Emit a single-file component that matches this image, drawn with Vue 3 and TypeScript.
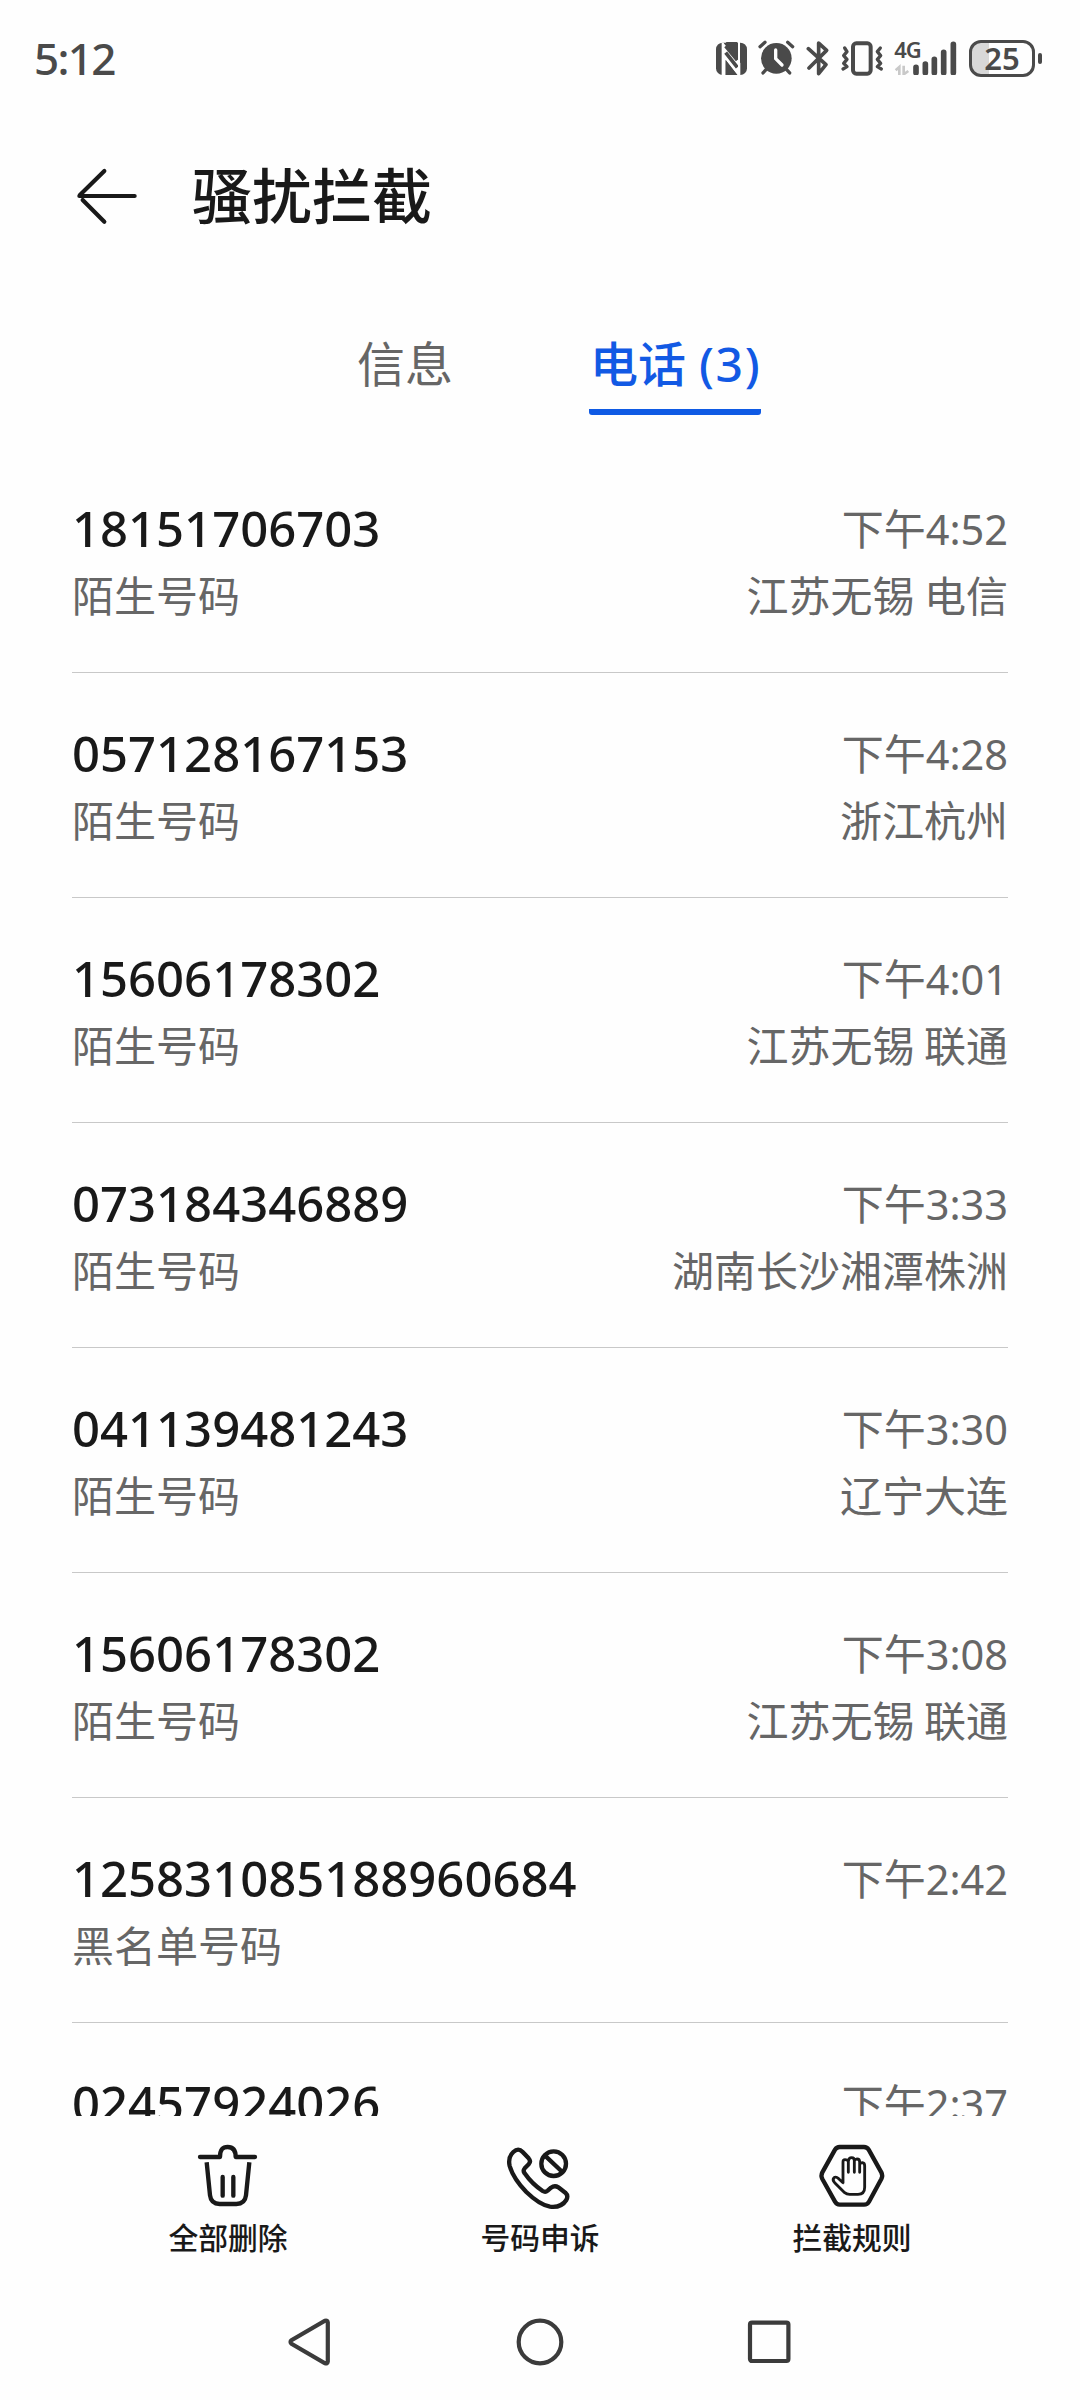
<script setup lang="ts">
interface CallRecord {
  number: string
  label: string
  time: string
  place: string
}

const calls: CallRecord[] = [
  { number: '18151706703', label: '陌生号码', time: '4:52', place: '江苏无锡 电信' },
  { number: '057128167153', label: '陌生号码', time: '4:28', place: '浙江杭州' },
  { number: '15606178302', label: '陌生号码', time: '4:01', place: '江苏无锡 联通' },
  { number: '073184346889', label: '陌生号码', time: '3:33', place: '湖南长沙湘潭株洲' },
  { number: '041139481243', label: '陌生号码', time: '3:30', place: '辽宁大连' },
  { number: '15606178302', label: '陌生号码', time: '3:08', place: '江苏无锡 联通' },
  { number: '125831085188960684', label: '黑名单号码', time: '2:42', place: '' },
  { number: '02457924026', label: '', time: '2:37', place: '' },
]
</script>

<template>
  <div class="screen">
    <header class="status">
      <span class="clock">5:12</span>
      <div class="status-icons">
        <svg class="nfc" viewBox="48 64 93 99">
          <rect x="48" y="66" width="93" height="97" rx="20" fill="#4a4a4a" />
          <path d="M68 64 L121 127 V163 L112 163 L77 118 V163 H68 Z" fill="#fff" />
          <path d="M77 76 L112 118 M77 96 L112 140" stroke="#4a4a4a" stroke-width="11" fill="none" />
          <path d="M77 64 L112 106 V64 Z" fill="#4a4a4a" />
          <path d="M77 118 L112 163 H77 Z" fill="#4a4a4a" />
          <path d="M68 66 V163 M117 64 V163" stroke="#fff" stroke-width="6" fill="none" />
        </svg>
        <svg class="alarm" viewBox="176 62 110 106">
          <circle cx="231" cy="117" r="46" fill="#4a4a4a" />
          <path d="M182 82 L197 69 M280 82 L265 69 M202 149 L191 161 M260 149 L271 161" stroke="#4a4a4a" stroke-width="10" stroke-linecap="round" />
          <path d="M229 92 V118 L248 137" stroke="#fff" stroke-width="10" stroke-linecap="round" stroke-linejoin="round" fill="none" />
        </svg>
        <svg class="bluetooth" viewBox="318 60 70 110">
          <path d="M325 86 L378 134 L356 161 V69 L380 91 L327 144" stroke="#4a4a4a" stroke-width="11" stroke-linecap="round" stroke-linejoin="round" fill="none" />
        </svg>
        <svg class="vibrate" viewBox="420 60 132 110">
          <rect x="459" y="70" width="53" height="91" rx="10" stroke="#4a4a4a" stroke-width="12" fill="none" />
          <path d="M434 84 L441 95 L431 107 L441 118 L431 130 L441 140 L429 147 M541 84 L532 95 L542 107 L532 118 L542 130 L532 140 L544 147" stroke="#4a4a4a" stroke-width="10" stroke-linecap="round" stroke-linejoin="round" fill="none" />
        </svg>
        <div class="signal">
          <span class="network">4G</span>
          <svg class="bars" viewBox="584 60 188 104">
            <path d="M600 162 V138 L589 148 M613 134 V160 L627 150" stroke="#c9c9c9" stroke-width="8" fill="none" />
            <path d="M650 139 V155 M678 129 V155 M705 115 V155 M733 94 V155 M762 70 V155" stroke="#4a4a4a" stroke-width="17" stroke-linecap="round" />
          </svg>
        </div>
        <div class="battery"><span>25</span></div>
        <div class="battery-cap"></div>
      </div>
    </header>

    <div class="title-bar">
      <svg class="back" viewBox="230 440 186 176">
        <path d="M240 527 H406 M241 525 L315 452 M250 539 L315 604" stroke="#191919" stroke-width="12.5" stroke-linecap="round" fill="none" />
      </svg>
      <h1>骚扰拦截</h1>
    </div>

    <nav class="tabs">
      <div class="tab">信息</div>
      <div class="tab active">电话<span class="count">(3)</span></div>
    </nav>

    <main class="list">
      <div v-for="(call, i) in calls" :key="i" class="row">
        <div class="line">
          <span class="number">{{ call.number }}</span>
          <span class="time">下午<span class="digits">{{ call.time }}</span></span>
        </div>
        <div class="line detail">
          <span>{{ call.label }}</span>
          <span>{{ call.place }}</span>
        </div>
      </div>
    </main>

    <footer class="tools">
      <div class="tool">
        <svg viewBox="156 210 216 216">
          <path d="M180 261 H240 C240 239 248 231 263 231 C278 231 287 239 287 261 H345" />
          <path d="M200 277 L210 376 Q213 402 239 402 H289 Q315 402 318 376 L328 277" stroke-linecap="butt" />
          <path d="M248 321 V377 M280 321 V377" />
        </svg>
        <span>全部删除</span>
      </div>
      <div class="tool">
        <svg viewBox="132 210 216 216">
          <path d="M160 246 Q175 232 188 246 L206 265 Q214 274 206 283 L194 295 Q188 302 194 310 Q216 342 248 363 Q256 368 263 362 L273 353 Q284 345 295 352 L316 368 Q326 377 319 390 Q304 414 270 410 Q238 404 199 366 Q160 325 149 288 Q143 262 160 246 Z" />
          <circle cx="281" cy="281" r="37" />
          <path d="M255 257 L307 306" />
        </svg>
        <span>号码申诉</span>
      </div>
      <div class="tool">
        <svg viewBox="168 210 216 216">
          <path d="M239 231 H312 Q321 231 326 239 L364 307 Q369 317 364 327 L327 395 Q322 404 312 404 H239 Q230 404 225 395 L187 327 Q182 317 187 307 L225 239 Q230 231 239 231 Z" />
          <path class="hand" d="M249 338 V276 Q249 269 255 269 Q262 269 265 274 V307 M265 274 Q266 263 275 263 Q283 263 283 272 V307 M283 272 Q285 267 291 267 Q299 267 299 276 V307 M299 284 Q301 278 307 278 Q314 279 314 287 V352 Q314 373 294 373 H269 Q260 373 254 368 L224 338 Q216 329 222 323 Q228 319 236 326 L249 338" />
        </svg>
        <span>拦截规则</span>
      </div>
    </footer>

    <div class="system-nav">
      <svg viewBox="0 0 60 60"><path d="M10.5 30 Q10.5 29 11.5 28.2 L45 8.8 Q47.5 8 47.8 10.5 V49.5 Q47.5 52 45 51.2 L11.5 31.8 Q10.5 31 10.5 30 Z" /></svg>
      <svg viewBox="0 0 60 60"><circle cx="30" cy="30" r="21.3" /></svg>
      <svg viewBox="0 0 60 60"><rect x="10" y="10.6" width="38.4" height="38.4" rx="2" /></svg>
    </div>
  </div>
</template>

<style>
body {
  background: #fefefe;
}
</style>

<style scoped>
.screen {
  width: 1080px;
  height: 2400px;
  display: flex;
  flex-direction: column;
  overflow: hidden;
  background: #fefefe;
  color: #191919;
  font-family: "Noto Sans CJK SC", sans-serif;
}
svg {
  display: block;
  flex: none;
}
.status {
  height: 116px;
  flex: none;
  display: flex;
  justify-content: space-between;
  align-items: center;
  padding: 0 38px 0 34px;
  box-sizing: border-box;
  color: #4a4a4a;
  font-family: "Noto Sans", sans-serif;
}
.clock {
  font-size: 44px;
  line-height: 60px;
  letter-spacing: -1.7px;
  font-weight: 500;
}
.status-icons {
  display: flex;
  align-items: center;
}
.nfc { width: 31px; height: 33px; }
.alarm { width: 36.7px; height: 35.3px; margin-left: 11.7px; }
.bluetooth { width: 23.3px; height: 36.7px; margin-left: 10.7px; }
.vibrate { width: 44px; height: 36.7px; margin-left: 10.7px; }
.signal {
  width: 62.7px;
  height: 35px;
  margin-left: 10.7px;
  position: relative;
}
.bars { width: 62.7px; height: 34.7px; }
.network {
  position: absolute;
  left: 0;
  top: -4px;
  font: 600 22px/24px "Noto Sans", sans-serif;
  letter-spacing: -1.2px;
}
.battery {
  width: 66px;
  height: 37px;
  margin-left: 12px;
  box-sizing: border-box;
  border: 3px solid #4a4a4a;
  border-radius: 12px;
  background: linear-gradient(to right, #d8d8d8 17px, transparent 17px);
  display: flex;
  align-items: center;
  justify-content: center;
  font-size: 31px;
  line-height: 31px;
  font-weight: 600;
}
.battery-cap {
  width: 4px;
  height: 11px;
  margin-left: 3px;
  border-radius: 2px;
  background: #4a4a4a;
}
.title-bar {
  height: 160px;
  flex: none;
  display: flex;
  align-items: center;
  padding-left: 76px;
}
.back { width: 62px; height: 58.7px; }
h1 {
  margin: 0 0 0 54px;
  padding-bottom: 6px;
  font-size: 60px;
  line-height: 80px;
  font-weight: 500;
}
.tabs {
  height: 172px;
  flex: none;
  display: flex;
  gap: 136px;
  padding: 46px 0 0 357px;
  box-sizing: border-box;
}
.tab {
  height: 93px;
  box-sizing: border-box;
  font-size: 48px;
  line-height: 78px;
  color: #666;
}
.active {
  width: 172px;
  padding-left: 1px;
  color: #1259e4;
  font-weight: 500;
  white-space: nowrap;
  border-bottom: 6px solid #0f5ae4;
  border-radius: 3px;
}
.count {
  margin-left: 13px;
  font-family: "Noto Sans", sans-serif;
  letter-spacing: 1.6px;
}
.list {
  height: 1668px;
  flex: none;
  overflow: hidden;
  padding: 0 72px;
}
.row {
  height: 225px;
  box-sizing: border-box;
  padding-top: 48px;
  border-bottom: 1px solid #c8c8c8;
}
.line {
  display: flex;
  justify-content: space-between;
  height: 66px;
  line-height: 64px;
}
.number {
  font-family: "Noto Sans", sans-serif;
  font-size: 49px;
  font-weight: 500;
}
.time,
.detail {
  font-size: 42px;
  color: #666;
}
.time {
  line-height: 62px;
}
.digits {
  font-family: "Noto Sans", sans-serif;
  font-size: 41.5px;
}
.tools {
  height: 168px;
  flex: none;
  display: flex;
  padding: 24px 72px 0;
  box-sizing: border-box;
}
.tool {
  flex: 1;
  display: flex;
  flex-direction: column;
  align-items: center;
  font-size: 29.8px;
  line-height: 40px;
  font-weight: 500;
}
.tool svg {
  width: 72px;
  height: 72px;
  margin-bottom: 4px;
  fill: none;
  stroke: #191919;
  stroke-width: 13;
  stroke-linecap: round;
  stroke-linejoin: round;
}
.tool .hand {
  stroke-width: 8.5;
}
.system-nav {
  flex: 1;
  display: flex;
  justify-content: center;
  align-items: center;
  gap: 170px;
}
.system-nav svg {
  width: 60px;
  height: 60px;
  fill: none;
  stroke: #3b3b3b;
  stroke-width: 4.2;
}
</style>
